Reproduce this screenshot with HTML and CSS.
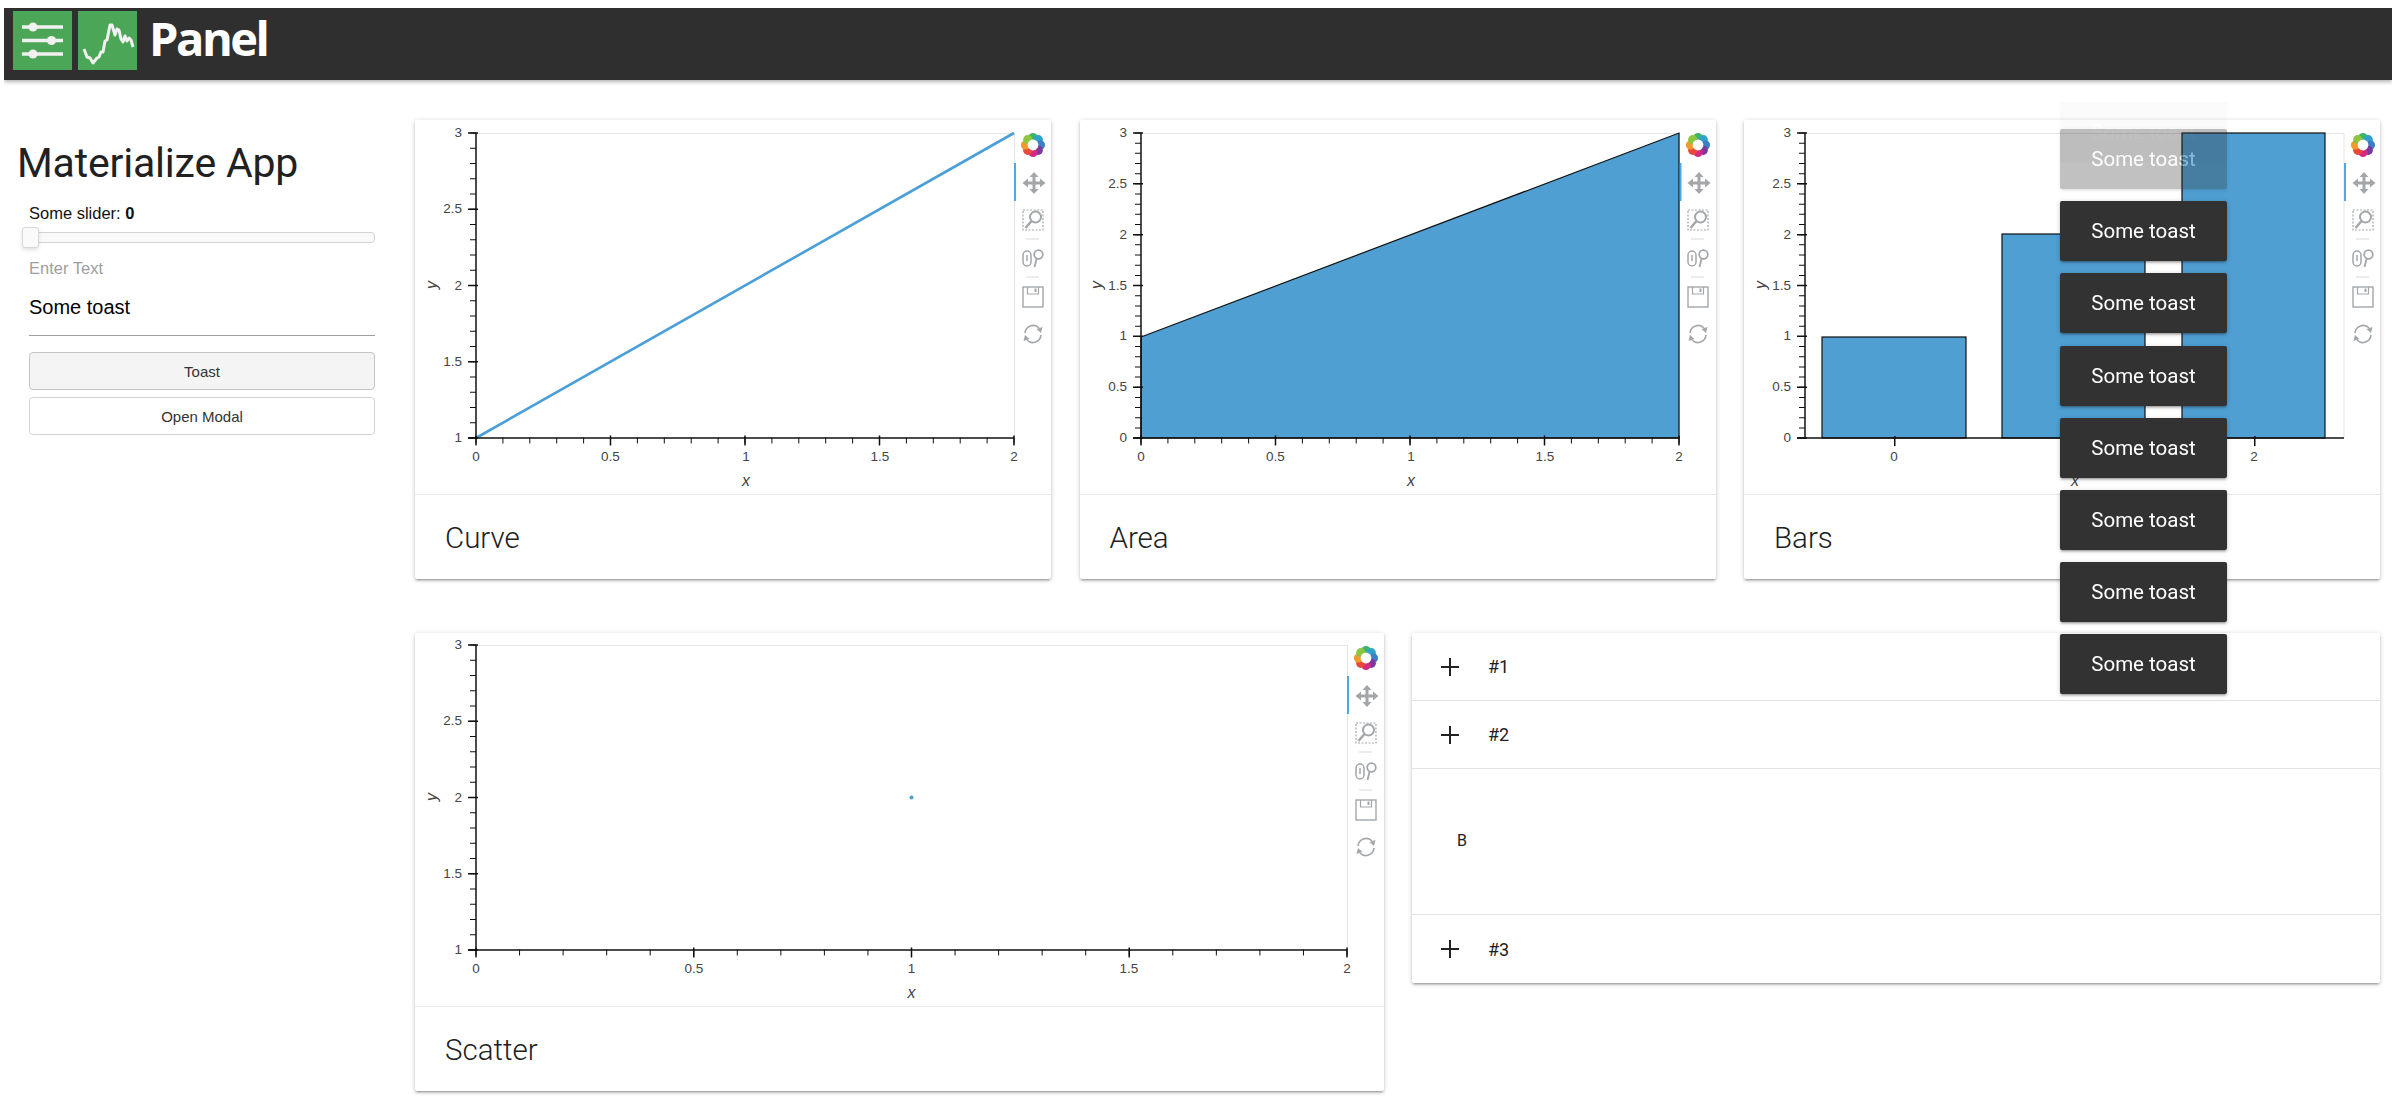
FILE: index.html
```html
<!DOCTYPE html>
<html lang="en">
<head>
    <meta charset="UTF-8">
    <title>Materialize App</title>
    <link rel="stylesheet" href="styles.css">
</head>
<body>
    <!-- shared plot parts -->
    <svg class="sprites" aria-hidden="true">
        <defs>
            <g id="toolbar">
                <!-- bokeh logo -->
                <g transform="translate(19 25)">
                    <circle cx="0" cy="-7.5" r="4.6" fill="#3fb56b"/>
                    <circle cx="5.3" cy="-5.3" r="4.6" fill="#2fa3c9"/>
                    <circle cx="7.5" cy="0" r="4.6" fill="#3d7fc4"/>
                    <circle cx="5.3" cy="5.3" r="4.6" fill="#7a3a9c"/>
                    <circle cx="0" cy="7.5" r="4.6" fill="#d42a82"/>
                    <circle cx="-5.3" cy="5.3" r="4.6" fill="#e8483a"/>
                    <circle cx="-7.5" cy="0" r="4.6" fill="#f29a2e"/>
                    <circle cx="-5.3" cy="-5.3" r="4.6" fill="#8cc63f"/>
                    <circle r="5.4" fill="#fff"/>
                </g>
                <rect class="tool-active" x="0" y="43" width="2" height="38"/>
                <!-- pan -->
                <g class="tool-icon" transform="translate(20 63)">
                    <path d="M0-11l4.500 5h-3v4.500h4.500v-3l5.500 4.500-5.500 4.500v-3h-4.500v4.500h3l-4.500 5-4.500-5h3v-4.500h-4.500v3l-5.500-4.500 5.500-4.500v3h4.500v-4.500h-3z"/>
                </g>
                <!-- box zoom -->
                <g class="tool-line" transform="translate(19 100)">
                    <rect x="-10" y="-10" width="20" height="20" stroke-width="1.200" stroke-dasharray="2 1.500"/>
                    <circle cx="2.500" cy="-3" r="5.500" fill="#fff" stroke-width="2"/>
                    <path d="M-1.500 1l-6 7" stroke-width="2.500"/>
                </g>
                <rect class="tool-sep" x="12" y="118.500" width="13" height="1"/>
                <!-- wheel zoom -->
                <g class="tool-line" transform="translate(19 138)">
                    <rect x="-10" y="-7" width="8" height="15" rx="4" stroke-width="1.500"/>
                    <path d="M-6-3v6" stroke-width="1.500"/>
                    <circle cx="5.500" cy="-3.500" r="4.300" stroke-width="1.800"/>
                    <path d="M3.500 1l-2 8" stroke-width="1.800"/>
                </g>
                <rect class="tool-sep" x="12" y="156.500" width="13" height="1"/>
                <!-- save -->
                <g class="tool-line" transform="translate(19 177)">
                    <rect x="-10" y="-10" width="20" height="20" stroke-width="1.400"/>
                    <path d="M-5.500-10v7h11v-7" stroke-width="1.200"/>
                    <rect class="tool-fill" x="1.500" y="-8.500" width="2" height="3.500"/>
                </g>
                <!-- reset -->
                <g class="tool-line" transform="translate(19 214)">
                    <path d="M-8-1a8.200 8.200 0 0 1 14-5" stroke-width="1.700"/>
                    <path d="M8 1a8.200 8.200 0 0 1-14 5" stroke-width="1.700"/>
                    <path class="tool-fill" d="M9.500-7l-1.500 6-4.500-4z"/>
                    <path class="tool-fill" d="M-9.500 7l1.500-6 4.500 4z"/>
                </g>
            </g>

            <g id="y-axis-1-3">
                <line class="axis-line" x1="61" y1="13" x2="61" y2="318"/>
                <line class="tick-major" x1="58" y1="12.250" x2="58" y2="319" stroke-dasharray="1.500 74.750"/>
                <line class="tick-minor" x1="58" y1="12.500" x2="58" y2="319" stroke-dasharray="1 14.250"/>
                <text class="tick-y" x="47" y="17">3</text>
                <text class="tick-y" x="47" y="93">2.5</text>
                <text class="tick-y" x="47" y="170">2</text>
                <text class="tick-y" x="47" y="246">1.5</text>
                <text class="tick-y" x="47" y="322">1</text>
                <text class="axis-label" transform="translate(22 165) rotate(-90)">y</text>
            </g>

            <g id="y-axis-0-3">
                <line class="axis-line" x1="61" y1="13" x2="61" y2="318"/>
                <line class="tick-major" x1="58" y1="12.250" x2="58" y2="319" stroke-dasharray="1.500 49.330"/>
                <line class="tick-minor" x1="58" y1="12.500" x2="58" y2="319" stroke-dasharray="1 9.170"/>
                <text class="tick-y" x="47" y="17">3</text>
                <text class="tick-y" x="47" y="68">2.5</text>
                <text class="tick-y" x="47" y="119">2</text>
                <text class="tick-y" x="47" y="170">1.5</text>
                <text class="tick-y" x="47" y="220">1</text>
                <text class="tick-y" x="47" y="271">0.5</text>
                <text class="tick-y" x="47" y="322">0</text>
                <text class="axis-label" transform="translate(22 165) rotate(-90)">y</text>
            </g>

            <g id="x-axis-0-2">
                <line class="axis-line" x1="53" y1="318" x2="599" y2="318"/>
                <line class="tick-major" x1="60.250" y1="320.500" x2="600" y2="320.500" stroke-width="9" stroke-dasharray="1.500 133"/>
                <line class="tick-minor" x1="60.500" y1="320.500" x2="600" y2="320.500" stroke-width="5" stroke-dasharray="1 25.900"/>
                <text class="tick-x" x="61" y="341">0</text>
                <text class="tick-x" x="195.500" y="341">0.5</text>
                <text class="tick-x" x="331" y="341">1</text>
                <text class="tick-x" x="465" y="341">1.5</text>
                <text class="tick-x" x="599" y="341">2</text>
                <text class="axis-label" x="331" y="366">x</text>
            </g>

            <path id="frame-small" class="plot-frame" d="M61 13.500H599.500V318"/>
        </defs>
    </svg>

    <header class="topbar">
        <div class="logo-square">
            <svg width="59" height="59" viewBox="0 0 59 59">
                <path class="logo-stroke" d="M9 16h41M9 29.500h41M9 43h41"/>
                <circle class="logo-dot" cx="20" cy="16" r="4.500"/>
                <circle class="logo-dot" cx="38.500" cy="29.500" r="4.500"/>
                <circle class="logo-dot" cx="20" cy="43" r="4.500"/>
            </svg>
        </div>
        <div class="logo-square">
            <svg width="59" height="59" viewBox="0 0 59 59">
                <path class="logo-line" d="M6 38l3 8 3 1 3 5 4-5 2-1 2-5 2 0 2-11 2-1 3-15 2 0 3 10 2-6 2 1 2 9 2 3 2-6 2 5 2-3 2 2 2 7"/>
            </svg>
        </div>
        <span class="brand">Panel</span>
    </header>

    <div class="page">
        <aside class="sidebar">
            <h1 class="app-title">Materialize App</h1>
            <div class="controls">
                <div class="slider-label">Some slider: <b>0</b></div>
                <div class="slider-track"><span class="slider-handle"></span></div>
                <div class="enter-text">Enter Text</div>
                <div class="text-input">Some toast</div>
                <button class="btn btn-active">Toast</button>
                <button class="btn">Open Modal</button>
            </div>
        </aside>

        <main class="content">
            <div class="row row-three">
                <section class="card">
                    <svg class="plot" width="636" height="374" viewBox="0 0 636 374">
                        <use href="#frame-small"/>
                        <line class="glyph-line" x1="61" y1="318" x2="599" y2="13"/>
                        <use href="#y-axis-1-3"/>
                        <use href="#x-axis-0-2"/>
                        <use href="#toolbar" x="599"/>
                    </svg>
                    <div class="card-title">Curve</div>
                </section>

                <section class="card">
                    <svg class="plot" width="636" height="374" viewBox="0 0 636 374">
                        <use href="#frame-small"/>
                        <use href="#toolbar" x="599"/>
                        <polygon class="glyph-fill" points="61,217 599,13 599,318 61,318"/>
                        <rect class="tool-active" x="599.500" y="43" width="2" height="38"/>
                        <use href="#y-axis-0-3"/>
                        <use href="#x-axis-0-2"/>
                    </svg>
                    <div class="card-title">Area</div>
                </section>

                <section class="card">
                    <svg class="plot" width="636" height="374" viewBox="0 0 636 374">
                        <path class="plot-frame" d="M61 13.500H600V318"/>
                        <rect class="glyph-fill" x="78" y="217" width="144" height="101"/>
                        <rect class="glyph-fill" x="258" y="114" width="143" height="204"/>
                        <rect class="glyph-fill" x="438" y="13" width="143" height="305"/>
                        <use href="#y-axis-0-3"/>
                        <line class="axis-line" x1="53" y1="318" x2="600" y2="318"/>
                        <line class="tick-major" x1="150" y1="321" x2="151.500" y2="321" stroke-width="10"/>
                        <line class="tick-major" x1="330" y1="321" x2="331.500" y2="321" stroke-width="10"/>
                        <line class="tick-major" x1="510" y1="321" x2="511.500" y2="321" stroke-width="10"/>
                        <text class="tick-x" x="150" y="341">0</text>
                        <text class="tick-x" x="510" y="341">2</text>
                        <text class="axis-label" x="331" y="366">x</text>
                        <use href="#toolbar" x="600"/>
                    </svg>
                    <div class="card-title">Bars</div>
                </section>
            </div>

            <div class="row row-two">
                <section class="card">
                    <svg class="plot" width="969" height="373" viewBox="0 1 969 373">
                        <path class="plot-frame" d="M61 13.500H932.500V318"/>
                        <circle class="glyph-point" cx="496.500" cy="165.500" r="2"/>
                        <use href="#y-axis-1-3"/>
                        <line class="axis-line" x1="53" y1="318" x2="932" y2="318"/>
                        <line class="tick-major" x1="60.250" y1="320.500" x2="933" y2="320.500" stroke-width="9" stroke-dasharray="1.500 216.250"/>
                        <line class="tick-minor" x1="60.500" y1="320.500" x2="933" y2="320.500" stroke-width="5" stroke-dasharray="1 42.550"/>
                        <text class="tick-x" x="61" y="341">0</text>
                        <text class="tick-x" x="279" y="341">0.5</text>
                        <text class="tick-x" x="496.500" y="341">1</text>
                        <text class="tick-x" x="714" y="341">1.5</text>
                        <text class="tick-x" x="932" y="341">2</text>
                        <text class="axis-label" x="496.500" y="366">x</text>
                        <use href="#toolbar" x="932" y="1"/>
                    </svg>
                    <div class="card-title">Scatter</div>
                </section>

                <section class="accordion">
                    <div class="acc-row">
                        <svg class="acc-plus" width="18" height="18" viewBox="0 0 18 18"><path d="M9 0v18M0 9h18"/></svg>
                        <span>#1</span>
                    </div>
                    <div class="acc-row">
                        <svg class="acc-plus" width="18" height="18" viewBox="0 0 18 18"><path d="M9 0v18M0 9h18"/></svg>
                        <span>#2</span>
                    </div>
                    <div class="acc-body">B</div>
                    <div class="acc-row">
                        <svg class="acc-plus" width="18" height="18" viewBox="0 0 18 18"><path d="M9 0v18M0 9h18"/></svg>
                        <span>#3</span>
                    </div>
                </section>
            </div>
        </main>
    </div>

    <div class="toast-stack">
        <div class="toast toast-leaving">Some toast</div>
        <div class="toast toast-fading">Some toast</div>
        <div class="toast">Some toast</div>
        <div class="toast">Some toast</div>
        <div class="toast">Some toast</div>
        <div class="toast">Some toast</div>
        <div class="toast">Some toast</div>
        <div class="toast">Some toast</div>
        <div class="toast">Some toast</div>
    </div>
</body>
</html>
```

FILE: styles.css
```css
* {
    box-sizing: border-box;
}

body {
    margin: 8px 8px 0 4px;
    background: #fff;
    color: #212121;
    font-family: Roboto, "Liberation Sans", sans-serif;
}

.sprites {
    position: absolute;
    width: 0;
    height: 0;
}

/* top bar */
.topbar {
    display: flex;
    align-items: flex-start;
    gap: 6px;
    height: 72px;
    padding: 3px 0 0 9px;
    background: #2f2f2f;
    box-shadow: 0 2px 4px rgba(0,0,0,0.3);
}

.logo-square {
    width: 59px;
    height: 59px;
    background: #4ba657;
}

.logo-stroke {
    fill: none;
    stroke: #f1f1f1;
    stroke-width: 3.5;
}

.logo-dot {
    fill: #f1f1f1;
}

.logo-line {
    fill: none;
    stroke: #f1f1f1;
    stroke-width: 3;
    stroke-linejoin: round;
}

.brand {
    margin-left: 6px;
    color: #fff;
    font-family: "Open Sans", sans-serif;
    font-size: 47px;
    font-weight: 700;
    line-height: 54px;
    letter-spacing: -2.5px;
}

/* page layout */
.page {
    display: flex;
    padding: 40px 0 29px;
}

.sidebar {
    flex: none;
    width: 411px;
    padding: 18px 0 0 13px;
}

.app-title {
    margin: 0;
    font-size: 41px;
    font-weight: 400;
    line-height: 50px;
    letter-spacing: -0.2px;
}

.controls {
    width: 346px;
    margin: 15px 0 0 12px;
}

.slider-label {
    color: #111;
    font-family: "Liberation Sans", sans-serif;
    font-size: 16.5px;
    line-height: 20px;
}

.slider-track {
    position: relative;
    height: 11px;
    margin-top: 9px;
    background: #fafafa;
    border: 1px solid #d3d3d3;
    border-radius: 4px;
}

.slider-handle {
    position: absolute;
    top: -6px;
    left: -8px;
    width: 17px;
    height: 21px;
    background: #fafafa;
    border: 1px solid #d9d9d9;
    border-radius: 3px;
    box-shadow: 0 2px 4px rgba(0,0,0,0.12);
}

.enter-text {
    margin-top: 15px;
    color: #9e9e9e;
    font-family: "Liberation Sans", sans-serif;
    font-size: 16.5px;
    line-height: 20px;
}

.text-input {
    margin-top: 17px;
    padding-bottom: 16px;
    color: #000;
    font-family: "Liberation Sans", sans-serif;
    font-size: 20px;
    line-height: 24px;
    border-bottom: 1.5px solid #9e9e9e;
}

.btn {
    display: block;
    width: 100%;
    height: 38px;
    margin-top: 7px;
    background: #fff;
    color: #333;
    font-family: "Liberation Sans", sans-serif;
    font-size: 15px;
    border: 1px solid #d4d4d4;
    border-radius: 4px;
}

.btn-active {
    margin-top: 16px;
    background: #f4f4f4;
    border-color: #c4c4c4;
}

.content {
    display: flex;
    flex-direction: column;
    gap: 54px;
    width: 1965px;
}

.row {
    display: flex;
    align-items: flex-start;
}

.row-three {
    gap: 28.5px;
}

.row-two {
    gap: 28px;
}

/* cards */
.card {
    background: #fff;
    border-radius: 2px;
    box-shadow: 0 2px 2px 0 rgba(0,0,0,0.14), 0 3px 1px -2px rgba(0,0,0,0.12), 0 1px 5px 0 rgba(0,0,0,0.2);
}

.plot {
    display: block;
}

.card-title {
    height: 85px;
    padding: 0 30px;
    font-size: 29.5px;
    font-weight: 300;
    line-height: 86px;
    border-top: 1.5px solid #e9e9e9;
}

/* plot parts */
.plot-frame {
    fill: none;
    stroke: #e5e5e5;
    stroke-width: 1;
}

.axis-line {
    stroke: #111;
    stroke-width: 1.5;
}

.tick-major {
    stroke: #111;
    stroke-width: 10;
}

.tick-minor {
    stroke: #111;
    stroke-width: 6;
}

.tick-x,
.tick-y,
.axis-label {
    fill: #444;
    font-family: "Liberation Sans", sans-serif;
    font-size: 13.5px;
}

.tick-x {
    text-anchor: middle;
}

.tick-y {
    text-anchor: end;
}

.axis-label {
    font-size: 16px;
    font-style: italic;
    text-anchor: middle;
}

.glyph-line {
    stroke: #4a9fd8;
    stroke-width: 2.6;
}

.glyph-fill {
    fill: #4f9fd3;
    stroke: #111;
    stroke-width: 1.2;
}

.glyph-point {
    fill: #4a9fd8;
}

.tool-active {
    fill: #4ea9e0;
}

.tool-icon path,
.tool-fill {
    fill: #a3a7aa;
    stroke: none;
}

.tool-line {
    fill: none;
    stroke: #a3a7aa;
}

.tool-sep {
    fill: #d9d9d9;
}

/* accordion */
.accordion {
    flex: 1;
    background: #fff;
    border-radius: 2px;
    box-shadow: 0 2px 2px 0 rgba(0,0,0,0.14), 0 3px 1px -2px rgba(0,0,0,0.12), 0 1px 5px 0 rgba(0,0,0,0.2);
}

.acc-row {
    display: flex;
    align-items: center;
    gap: 29px;
    height: 68px;
    padding-left: 29px;
    font-size: 18px;
    font-weight: 400;
    border-bottom: 1.5px solid #e3e3e3;
}

.acc-row:last-child {
    border-bottom: none;
}

.acc-plus {
    flex: none;
}

.acc-plus path {
    fill: none;
    stroke: #222;
    stroke-width: 2;
}

.acc-body {
    display: flex;
    align-items: center;
    height: 146px;
    padding: 0 0 2px 45px;
    font-size: 16px;
    border-bottom: 1.5px solid #e3e3e3;
}

/* toasts */
.toast-stack {
    position: fixed;
    top: 102px;
    left: 2060px;
    display: flex;
    flex-direction: column;
    gap: 12.2px;
    width: 167px;
}

.toast {
    height: 60px;
    background: #323232;
    color: #fff;
    font-size: 20.5px;
    font-weight: 400;
    line-height: 60px;
    text-align: center;
    border-radius: 2px;
    box-shadow: 0 2px 2px 0 rgba(0,0,0,0.14), 0 3px 1px -2px rgba(0,0,0,0.12), 0 1px 5px 0 rgba(0,0,0,0.2);
}

.toast-leaving {
    margin-bottom: -45.2px;
    opacity: 0.02;
}

.toast-fading {
    opacity: 0.3;
}
```
